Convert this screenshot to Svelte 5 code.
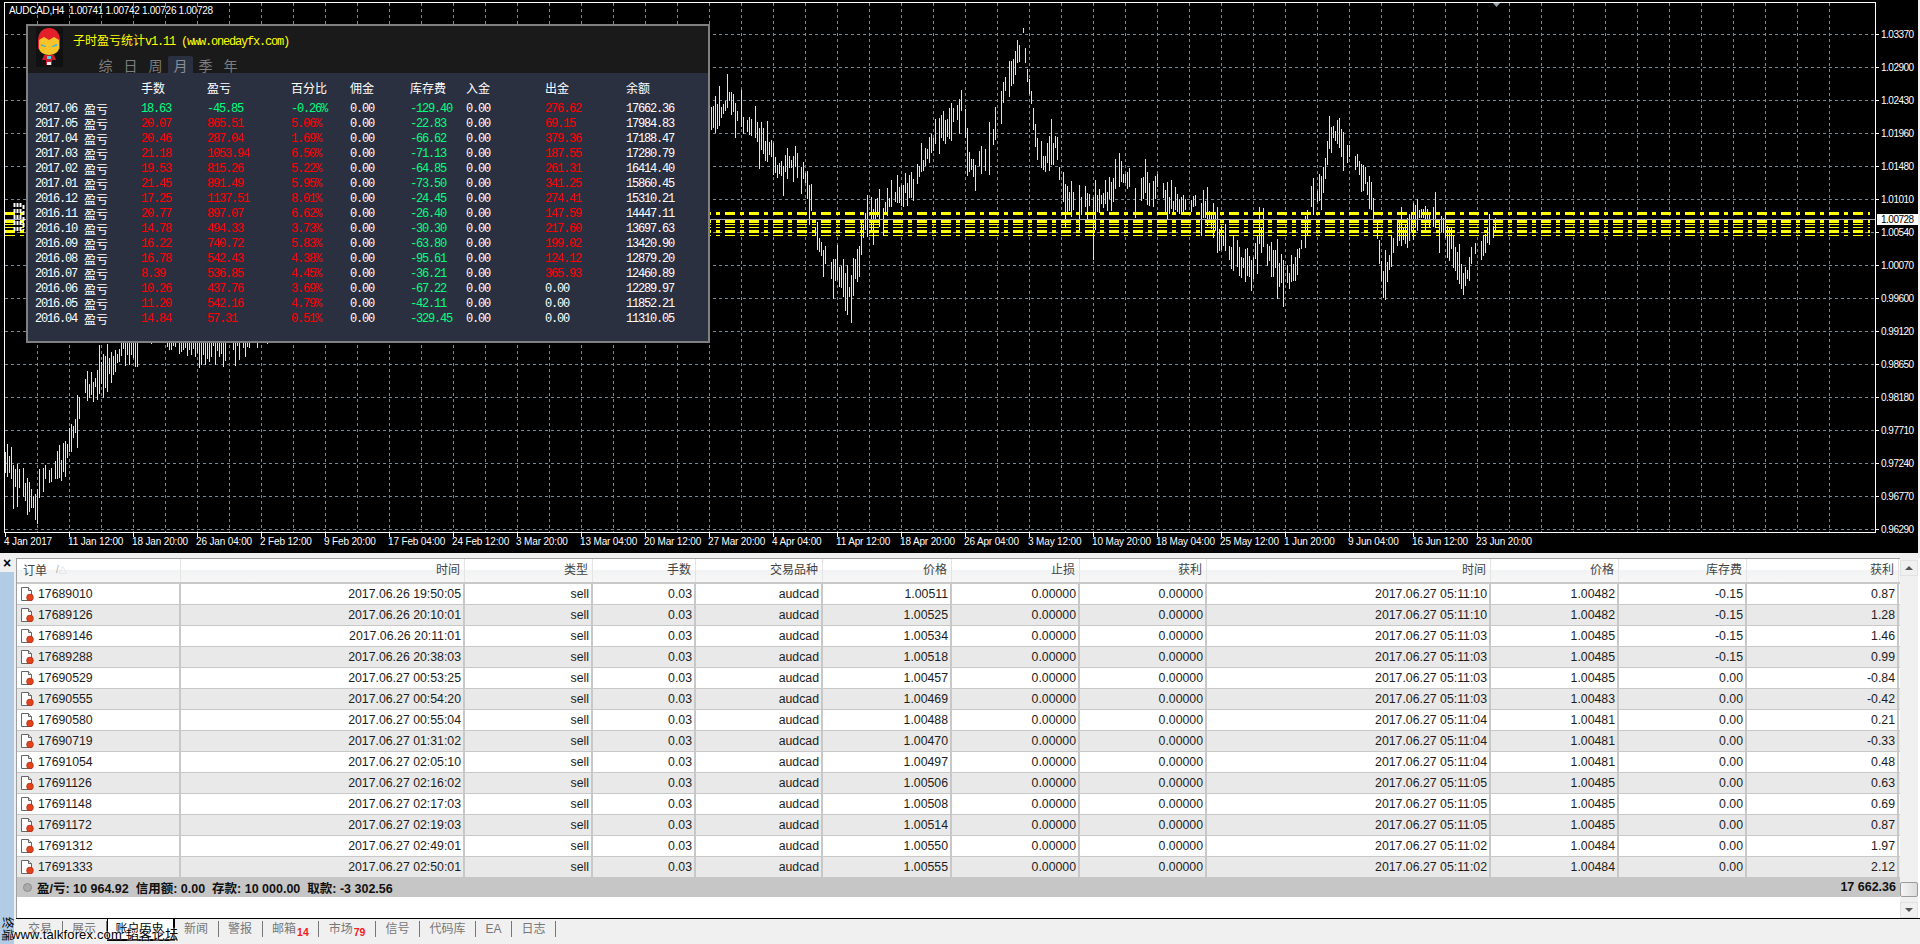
<script>
	// price path of the chart: [x, y] centres read off the reference
	const path = [
		[5, 462], [14, 478], [24, 492], [36, 500], [45, 478], [55, 470], [65, 448], [75, 425], [85, 398], [100, 372],
		[130, 345], [160, 320], [190, 345], [215, 352], [240, 338], [300, 300], [400, 260], [500, 220], [600, 180],
		[700, 130], [710, 122], [732, 104], [747, 135], [770, 150], [780, 170], [794, 160], [803, 173], [810, 200],
		[816, 233], [826, 260], [841, 277], [851, 298], [857, 267], [866, 217], [887, 203], [901, 197], [923, 170],
		[937, 143], [951, 113], [962, 103], [967, 143], [973, 163], [985, 150], [994, 123], [1009, 73], [1023, 48],
		[1030, 90], [1035, 133], [1042, 157], [1055, 147], [1060, 187], [1076, 210], [1094, 207], [1112, 187],
		[1123, 177], [1137, 193], [1159, 177], [1166, 203], [1180, 200], [1196, 197], [1212, 220], [1230, 253],
		[1251, 263], [1262, 233], [1280, 273], [1284, 290], [1294, 267], [1309, 210], [1323, 187], [1332, 137],
		[1340, 135], [1347, 141], [1365, 178], [1378, 233], [1384, 280], [1396, 245], [1414, 214], [1445, 226],
		[1463, 280], [1475, 250], [1488, 235], [1495, 222]
	];
	const spikes = { 851: 323, 1094: 260, 1284: 307, 1463: 295, 1023: 28, 36: 520 };

	let seed = 7;
	function rnd() {
		seed = (seed * 16807) % 2147483647;
		return seed / 2147483647;
	}

	function centre(x) {
		for (let i = 1; i < path.length; i++) {
			if (x <= path[i][0]) {
				const [x0, y0] = path[i - 1];
				const [x1, y1] = path[i];
				return y0 + ((y1 - y0) * (x - x0)) / (x1 - x0);
			}
		}
		return path[path.length - 1][1];
	}

	let barsPath = '';
	let drift = 0;
	for (let x = 5; x <= 1495; x += 2) {
		drift = drift * 0.8 + (rnd() - 0.5) * 9;
		const spike = spikes[x] || spikes[x + 1];
		if (!spike && rnd() < 0.12) continue;
		const c = centre(x) + drift;
		const top = Math.round(c - 4 - rnd() * rnd() * 30);
		const bottom = Math.round(c + 4 + rnd() * rnd() * 30);
		barsPath += `M${x + 0.5} ${top}V${spike || bottom}`;
	}

	const hLines = Array.from({ length: 16 }, (_, i) => 34 + i * 33);
	const vLines = Array.from({ length: 57 }, (_, i) => 37 + i * 32);
	const prices = ['1.03370', '1.02900', '1.02430', '1.01960', '1.01480', '1.01010', '1.00540', '1.00070',
		'0.99600', '0.99120', '0.98650', '0.98180', '0.97710', '0.97240', '0.96770', '0.96290'];
	const times = ['4 Jan 2017', '11 Jan 12:00', '18 Jan 20:00', '26 Jan 04:00', '2 Feb 12:00', '9 Feb 20:00',
		'17 Feb 04:00', '24 Feb 12:00', '3 Mar 20:00', '13 Mar 04:00', '20 Mar 12:00', '27 Mar 20:00',
		'4 Apr 04:00', '11 Apr 12:00', '18 Apr 20:00', '26 Apr 04:00', '3 May 12:00', '10 May 20:00',
		'18 May 04:00', '25 May 12:00', '1 Jun 20:00', '9 Jun 04:00', '16 Jun 12:00', '23 Jun 20:00'];
	const levels = [
		{ y: 213, w: 3 }, { y: 221, w: 3 }, { y: 224.5, w: 1 }, { y: 227.5, w: 1 }, { y: 231, w: 3 }, { y: 235.5, w: 1 }
	];

	const statHead = ['手数', '盈亏', '百分比', '佣金', '库存费', '入金', '出金', '余额'];
	// month, lots, p/l, percent, swap, withdrawal, balance
	const stats = [
		['2017.06', '18.63', '-45.85', '-0.26%', '-129.40', '276.62', '17662.36'],
		['2017.05', '20.07', '865.51', '5.06%', '-22.83', '69.15', '17984.83'],
		['2017.04', '20.46', '287.04', '1.69%', '-66.62', '379.36', '17188.47'],
		['2017.03', '21.18', '1053.94', '6.50%', '-71.13', '187.55', '17280.79'],
		['2017.02', '19.53', '815.26', '5.22%', '-64.85', '261.31', '16414.40'],
		['2017.01', '21.45', '891.49', '5.95%', '-73.50', '341.25', '15860.45'],
		['2016.12', '17.25', '1137.51', '8.01%', '-24.45', '274.41', '15310.21'],
		['2016.11', '20.77', '897.07', '6.62%', '-26.40', '147.59', '14447.11'],
		['2016.10', '14.78', '494.33', '3.73%', '-30.30', '217.60', '13697.63'],
		['2016.09', '16.22', '740.72', '5.83%', '-63.80', '199.02', '13420.90'],
		['2016.08', '16.78', '542.43', '4.38%', '-95.61', '124.12', '12879.20'],
		['2016.07', '8.39', '536.85', '4.45%', '-36.21', '365.93', '12460.89'],
		['2016.06', '10.26', '437.76', '3.69%', '-67.22', '0.00', '12289.97'],
		['2016.05', '11.20', '542.16', '4.79%', '-42.11', '0.00', '11852.21'],
		['2016.04', '14.84', '57.31', '0.51%', '-329.45', '0.00', '11310.05']
	];

	const columns = ['时间', '类型', '手数', '交易品种', '价格', '止损', '获利', '时间', '价格', '库存费', '获利'];
	const orders = [
		['17689010', '2017.06.26 19:50:05', '1.00511', '2017.06.27 05:11:10', '1.00482', '-0.15', '0.87'],
		['17689126', '2017.06.26 20:10:01', '1.00525', '2017.06.27 05:11:10', '1.00482', '-0.15', '1.28'],
		['17689146', '2017.06.26 20:11:01', '1.00534', '2017.06.27 05:11:03', '1.00485', '-0.15', '1.46'],
		['17689288', '2017.06.26 20:38:03', '1.00518', '2017.06.27 05:11:03', '1.00485', '-0.15', '0.99'],
		['17690529', '2017.06.27 00:53:25', '1.00457', '2017.06.27 05:11:03', '1.00485', '0.00', '-0.84'],
		['17690555', '2017.06.27 00:54:20', '1.00469', '2017.06.27 05:11:03', '1.00483', '0.00', '-0.42'],
		['17690580', '2017.06.27 00:55:04', '1.00488', '2017.06.27 05:11:04', '1.00481', '0.00', '0.21'],
		['17690719', '2017.06.27 01:31:02', '1.00470', '2017.06.27 05:11:04', '1.00481', '0.00', '-0.33'],
		['17691054', '2017.06.27 02:05:10', '1.00497', '2017.06.27 05:11:04', '1.00481', '0.00', '0.48'],
		['17691126', '2017.06.27 02:16:02', '1.00506', '2017.06.27 05:11:05', '1.00485', '0.00', '0.63'],
		['17691148', '2017.06.27 02:17:03', '1.00508', '2017.06.27 05:11:05', '1.00485', '0.00', '0.69'],
		['17691172', '2017.06.27 02:19:03', '1.00514', '2017.06.27 05:11:05', '1.00485', '0.00', '0.87'],
		['17691312', '2017.06.27 02:49:01', '1.00550', '2017.06.27 05:11:02', '1.00484', '0.00', '1.97'],
		['17691333', '2017.06.27 02:50:01', '1.00555', '2017.06.27 05:11:02', '1.00484', '0.00', '2.12']
	];

	const tabs = [
		{ label: '交易' }, { label: '展示' }, { label: '账户历史', active: true }, { label: '新闻' }, { label: '警报' },
		{ label: '邮箱', badge: '14' }, { label: '市场', badge: '79' }, { label: '信号' }, { label: '代码库' },
		{ label: 'EA' }, { label: '日志' }
	];
</script>

<div class="page">
	<div class="chart">
		<svg class="plot" viewBox="0 0 1918 553" width="1918" height="553">
			<g class="grid">
				{#each hLines as y}
					<line x1="5" x2="1875" y1={y + 0.5} y2={y + 0.5} />
				{/each}
				{#each vLines as x}
					<line x1={x + 0.5} x2={x + 0.5} y1="3" y2="532" />
				{/each}
			</g>

			<path class="bars" d={barsPath} />

			{#each levels as l}
				<line class="level" x1="5" x2="1870" y1={l.y} y2={l.y} stroke-width={l.w} />
			{/each}
			<line class="bid" x1="5" x2="1875" y1="219.5" y2="219.5" />
			<path class="blob" d="M14.5 203V232M17.5 203V232M20.5 203V232M23.5 205V230" />

			<path class="frame" d="M4.5 2.5H1875.5V532.5H4.5Z" />
			{#each hLines as y}
				<line class="tick" x1="1875" x2="1879" y1={y + 0.5} y2={y + 0.5} />
			{/each}
			{#each times as _, i}
				<line class="tick" x1={5.5 + i * 64} x2={5.5 + i * 64} y1="532" y2="537" />
			{/each}
			<path class="marker" d="M1493 3H1500L1496.5 7Z" />

			{#each prices as p, i}
				<text class="price" x="1881" y={hLines[i] + 4}>{p}</text>
			{/each}
			{#each times as t, i}
				<text class="time" x={4 + i * 64} y="545">{t}</text>
			{/each}
			<text class="symbol" x="9" y="14">AUDCAD,H4  1.00741 1.00742 1.00726 1.00728</text>

			<rect x="1877" y="214" width="41" height="11" fill="#fff" />
			<text class="price tag" x="1881" y="223">1.00728</text>
		</svg>

		<div class="panel">
			<div class="panel-head">
				<svg class="avatar" viewBox="0 0 27 40" width="27" height="40">
					<rect width="27" height="40" fill="#111" />
					<path d="M2 14C2 5 7 1 13 1S24 5 24 14V22H2Z" fill="#e3202a" />
					<path d="M3 13L8 10L13 13L18 10L23 13V21C23 25 18 28 13 28S3 25 3 21Z" fill="#f7c52b" />
					<path d="M5 17L10 19V20L5 19ZM21 17L16 19V20L21 19Z" fill="#3fb6d8" />
					<path d="M8 28H18L20 33H16V38H10V33H6Z" fill="#c8202a" />
					<rect x="11" y="29" width="4" height="3" fill="#4fd0e8" />
					<rect x="11" y="35" width="4" height="3" fill="#eee" />
				</svg>
				<div class="title"><span class="cjk">子时盈亏统计</span>v1.11 (www.onedayfx.com)</div>
				<div class="ranges">
					<span>综</span><span>日</span><span>周</span><span class="on">月</span><span>季</span><span>年</span>
				</div>
			</div>
			<div class="panel-body">
				<div class="stat-row head">
					<span></span>
					{#each statHead as h}
						<span class="cjk">{h}</span>
					{/each}
				</div>
				{#each stats as s, i}
					<div class="stat-row">
						<span class="month">{s[0]}<span class="cjk">盈亏</span></span>
						<span class={i === 0 ? 'up' : 'down'}>{s[1]}</span>
						<span class={i === 0 ? 'up' : 'down'}>{s[2]}</span>
						<span class={i === 0 ? 'up' : 'down'}>{s[3]}</span>
						<span>0.00</span>
						<span class="up">{s[4]}</span>
						<span>0.00</span>
						<span class={s[5] === '0.00' ? '' : 'down'}>{s[5]}</span>
						<span>{s[6]}</span>
					</div>
				{/each}
			</div>
		</div>
	</div>

	<div class="terminal">
		<div class="side">
			<div class="close">×</div>
			<div class="side-blue"><span class="side-label">终端</span></div>
		</div>
		<div class="main">
			<div class="table-wrap">
				<div class="table">
					<div class="row header">
						<div class="cell first">订单 <span class="sort">/<i>△</i></span></div>
						{#each columns as c}
							<div class="cell">{c}</div>
						{/each}
					</div>
					{#each orders as o}
						<div class="row">
							<div class="cell first">
								<svg class="doc" viewBox="0 0 14 14" width="14" height="14">
									<path d="M1.5 .5H8.5L11.5 3.5V13.5H1.5Z" fill="#fff" stroke="#666" />
									<path d="M8.5 .5V3.5H11.5" fill="#ddd" stroke="#666" />
									<circle cx="10" cy="10.5" r="3.4" fill="#e2421c" stroke="#a32a10" stroke-width=".6" />
								</svg>
								{o[0]}
							</div>
							<div class="cell">{o[1]}</div>
							<div class="cell">sell</div>
							<div class="cell">0.03</div>
							<div class="cell">audcad</div>
							<div class="cell">{o[2]}</div>
							<div class="cell">0.00000</div>
							<div class="cell">0.00000</div>
							<div class="cell">{o[3]}</div>
							<div class="cell">{o[4]}</div>
							<div class="cell">{o[5]}</div>
							<div class="cell">{o[6]}</div>
						</div>
					{/each}
					<div class="summary">
						<span class="dot"></span>
						<span class="totals">盈/亏: 10 964.92&nbsp; 信用额: 0.00&nbsp; 存款: 10 000.00&nbsp; 取款: -3 302.56</span>
						<span class="total">17 662.36</span>
					</div>
				</div>
				<div class="scrollbar">
					<div class="arrow"><i class="up-arrow"></i></div>
					<div class="track"></div>
					<div class="thumb"></div>
					<div class="arrow"><i class="down-arrow"></i></div>
				</div>
			</div>
			<div class="tabs">
				{#each tabs as t}
					<div class="tab" class:active={t.active}>
						{t.label}{#if t.badge}<span class="badge">{t.badge}</span>{/if}
					</div>
				{/each}
			</div>
		</div>
	</div>

	<div class="watermark">www.talkforex.com <span>韬客论坛</span></div>
</div>

<style>
	:global(body) {
		margin: 0;
		background: #f0f0f0;
		overflow: hidden;
	}

	.page {
		position: relative;
		width: 1920px;
		height: 944px;
		overflow: hidden;
		font-family: 'Liberation Sans', 'Noto Sans CJK SC', sans-serif;
	}

	/* chart */
	.chart {
		position: relative;
		width: 1918px;
		height: 553px;
		background: #000;
	}

	.plot {
		display: block;
	}

	.grid line {
		stroke: #778899;
		stroke-width: 1;
		stroke-dasharray: 3 3;
		shape-rendering: crispEdges;
	}

	.bars {
		stroke: #ffff00;
		stroke-width: 1;
		fill: none;
		shape-rendering: crispEdges;
	}

	.level {
		stroke: #ffff00;
		stroke-dasharray: 9.5 5.7 3.3 5.5;
		shape-rendering: crispEdges;
	}

	.bid {
		stroke: #a9a9b4;
		stroke-width: 1;
		shape-rendering: crispEdges;
	}

	.blob {
		stroke: #fff;
		stroke-width: 2;
		stroke-dasharray: 4 2;
		fill: none;
	}

	.frame {
		fill: none;
		stroke: #fff;
		stroke-width: 1;
		shape-rendering: crispEdges;
	}

	.tick {
		stroke: #fff;
		stroke-width: 1;
		shape-rendering: crispEdges;
	}

	.marker {
		fill: #9aa3ad;
	}

	.price,
	.time,
	.symbol {
		fill: #fff;
		font-size: 10px;
		font-family: 'Liberation Sans', sans-serif;
	}

	.price {
		letter-spacing: -0.5px;
	}

	.time {
		letter-spacing: -0.15px;
	}

	.symbol {
		white-space: pre;
		letter-spacing: -0.3px;
	}

	.tag {
		fill: #000;
	}

	/* floating statistics panel */
	.panel {
		position: absolute;
		left: 26px;
		top: 24px;
		width: 680px;
		height: 315px;
		border: 2px solid #808080;
		background: #2b3040;
		font-family: 'Liberation Mono', 'Noto Sans CJK SC', monospace;
		font-size: 12px;
		letter-spacing: -1.2px;
		color: #fff;
	}

	.panel-head {
		position: relative;
		height: 47px;
		background: #1a1a1a;
	}

	.avatar {
		position: absolute;
		left: 8px;
		top: 1px;
	}

	.title {
		position: absolute;
		left: 45px;
		top: 6px;
		color: #ffff00;
		line-height: 16px;
		white-space: pre;
	}

	.cjk {
		font-family: 'Noto Sans CJK SC', sans-serif;
		font-size: 12px;
		letter-spacing: 0;
	}

	.ranges {
		position: absolute;
		left: 65px;
		bottom: 0;
		display: flex;
		font-family: 'Noto Sans CJK SC', sans-serif;
		font-size: 14px;
		letter-spacing: 0;
		color: #7d7d7d;
	}

	.ranges span {
		width: 25px;
		height: 17px;
		line-height: 19px;
		text-align: center;
	}

	.ranges .on {
		background: #2b3040;
		border-radius: 2px 2px 0 0;
		color: #8a8f9a;
	}

	.panel-body {
		padding: 7px 0 0 7px;
	}

	.stat-row {
		display: grid;
		grid-template-columns: 106px 66px 84px 59px 60px 56px 79px 81px 70px;
		height: 15px;
		line-height: 15px;
		white-space: pre;
	}

	.stat-row.head {
		height: 22px;
		line-height: 15px;
	}

	.month {
		display: flex;
		gap: 7px;
		height: 15px;
	}

	.month .cjk {
		line-height: 14px;
		height: 15px;
	}

	.up {
		color: #00ff7f;
	}

	.down {
		color: #ff0000;
	}

	/* terminal window */
	.terminal {
		display: flex;
		height: 391px;
		padding-top: 5px;
		box-sizing: border-box;
	}

	.side {
		display: flex;
		flex-direction: column;
		width: 16px;
		flex: none;
	}

	.close {
		height: 14px;
		width: 14px;
		line-height: 10px;
		text-align: center;
		font-size: 14px;
		font-weight: bold;
		color: #000;
	}

	.side-blue {
		position: relative;
		flex: 1;
		width: 14px;
		background: #b3cce5;
	}

	.side-label {
		position: absolute;
		left: 0;
		bottom: 3px;
		width: 14px;
		writing-mode: vertical-rl;
		text-orientation: sideways;
		font-size: 12px;
		line-height: 14px;
		color: #000;
	}

	.main {
		flex: 1;
		display: flex;
		flex-direction: column;
		min-width: 0;
	}

	.table-wrap {
		display: flex;
		height: 360px;
		background: #fff;
	}

	.table {
		width: 1884px;
		flex: none;
		border-left: 1px solid #a0a0a0;
		box-sizing: border-box;
		font-size: 12.3px;
		color: #1c1c1c;
	}

	.row {
		display: grid;
		grid-template-columns: 164px 284px 128px 103px 127px 129px 128px 127px 284px 128px 128px 152px;
		height: 21px;
		box-sizing: border-box;
		border-bottom: 1px solid #c8c8c8;
		line-height: 20px;
		background: #fff;
	}

	.row:nth-child(odd) {
		background: #e9e9e9;
	}

	.row.header {
		height: 26px;
		border-top: 1px solid #a0a0a0;
		border-bottom: 2px solid #c8c8c8;
		background: linear-gradient(#fff, #fff 45%, #f2f3f4 50%, #f7f7f7);
		line-height: 22px;
		font-size: 12px;
		color: #444;
	}

	.cell {
		box-sizing: border-box;
		padding-right: 2px;
		text-align: right;
		border-right: 2px solid #c8c8c8;
		white-space: nowrap;
	}

	.header .cell {
		padding-right: 4px;
		border-right: 1px solid #e4e4e4;
	}

	.cell.first {
		display: flex;
		align-items: center;
		gap: 4px;
		padding-left: 3px;
		text-align: left;
	}

	.header .cell.first {
		padding-left: 6px;
		gap: 9px;
	}

	.sort {
		color: #aaa;
		font-size: 10px;
	}

	.sort i {
		font-style: normal;
		font-size: 8px;
		color: #ccc;
	}

	.doc {
		flex: none;
	}

	.summary {
		display: flex;
		align-items: center;
		height: 20px;
		margin-top: -1px;
		position: relative;
		background: #c6c6c6;
		font-weight: bold;
		color: #111;
		font-size: 12.5px;
	}

	.dot {
		width: 7px;
		height: 7px;
		margin-left: 6px;
		border-radius: 50%;
		background: #aaa;
		border: 1px solid #8c8c8c;
	}

	.totals {
		margin-left: 5px;
	}

	.total {
		margin-left: auto;
		margin-right: 4px;
	}

	.scrollbar {
		width: 18px;
		flex: none;
		display: flex;
		flex-direction: column;
		background: #f0f0f0;
	}

	.arrow {
		height: 16px;
		display: flex;
		align-items: center;
		justify-content: center;
		background: #f0f0f0;
		border: 1px solid #e2e2e2;
		box-sizing: border-box;
		margin-top: 2px;
	}

	.up-arrow,
	.down-arrow {
		border-left: 4px solid transparent;
		border-right: 4px solid transparent;
	}

	.up-arrow {
		border-bottom: 4px solid #555;
	}

	.down-arrow {
		border-top: 4px solid #555;
	}

	.track {
		flex: 1;
	}

	.thumb {
		height: 15px;
		margin-bottom: 3px;
		border: 1px solid #9a9a9a;
		border-radius: 2px;
		box-sizing: border-box;
		background: linear-gradient(90deg, #f4f4f4, #dcdcdc);
	}

	/* tabs under the terminal */
	.tabs {
		display: flex;
		height: 26px;
		box-sizing: border-box;
		border-top: 1px solid #000;
		background: #f0f0f0;
		font-size: 12px;
		color: #777;
	}

	.tab {
		height: 16px;
		margin-top: 2px;
		padding: 0 9.5px;
		line-height: 16px;
		border-right: 1px solid #777;
		white-space: nowrap;
	}

	.tab:first-child {
		padding-left: 12px;
	}

	.tab.active {
		height: 22px;
		margin-top: 0;
		padding: 0 8px;
		line-height: 20px;
		background: #fff;
		color: #000;
		border-left: 1px solid #000;
		border-right: 2px solid #000;
		border-bottom: 2px solid #000;
		box-sizing: border-box;
		width: 68px;
	}

	.badge {
		position: relative;
		top: 3px;
		margin-left: 1px;
		font-size: 10.5px;
		font-weight: bold;
		color: #f02020;
	}

	.watermark {
		position: absolute;
		left: 11px;
		top: 927px;
		font-size: 13px;
		letter-spacing: 0.15px;
		line-height: 16px;
		color: #000;
		white-space: pre;
		text-shadow: 0 0 2px #fff, 0 0 2px #fff;
	}
</style>
